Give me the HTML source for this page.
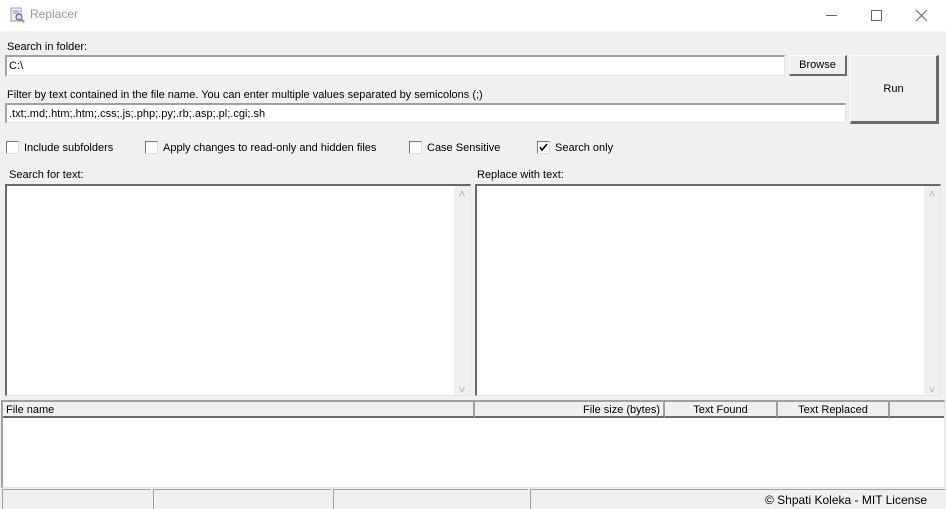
<!DOCTYPE html>
<html><head><meta charset="utf-8"><style>
*{box-sizing:border-box;margin:0;padding:0}
body{width:946px;height:509px;position:relative;overflow:hidden;background:#f0f0f0;font-family:"Liberation Sans",sans-serif;font-size:11px;color:#000}
.a{position:absolute}
.t{position:absolute;white-space:nowrap;line-height:12px}
.inp{position:absolute;background:#fff;border-top:2px solid #a0a0a0;border-left:2px solid #a0a0a0;border-right:1px solid #e3e3e3;border-bottom:1px solid #e3e3e3;padding:2px 2px 0;line-height:14px}
.btn{position:absolute;background:#f0f0f0;border-top:1px solid #fff;border-left:1px solid #fff;border-right:2px solid #696969;border-bottom:2px solid #696969;text-align:center}
.cb{position:absolute;width:13px;height:13px;background:#fff;border-top:1px solid #777;border-left:1px solid #777;border-right:1px solid #ddd;border-bottom:1px solid #ddd}
.ta{position:absolute;background:#fff;border-top:2px solid #696969;border-left:2px solid #696969;border-right:1px solid #e3e3e3;border-bottom:1px solid #e3e3e3}
.sb{position:absolute;right:0;top:0;bottom:0;width:16px;background:#f0f0f0;color:#b8b8b8;font-size:12px;text-align:center}
.hd{position:absolute;top:0;height:16px;border-right:2px solid #a0a0a0;border-bottom:2px solid #696969;background:#f0f0f0;line-height:16px;padding:0 3px}
.sp{position:absolute;top:489px;height:20px;border-top:1px solid #a0a0a0;border-left:1px solid #a0a0a0;background:#f0f0f0}
</style></head><body>
<div class="a" style="left:0;top:0;width:946px;height:31px;background:#fff"></div>
<svg class="a" style="left:10px;top:7px" width="16" height="16" viewBox="0 0 16 16"><rect x="1" y="1" width="10" height="13" fill="#eef" stroke="#99a"/><line x1="3" y1="4" x2="9" y2="4" stroke="#89a"/><line x1="3" y1="6" x2="9" y2="6" stroke="#89a"/><circle cx="9" cy="10" r="3" fill="#cde" stroke="#358"/><line x1="11" y1="12" x2="14" y2="15" stroke="#c84" stroke-width="2"/></svg>
<div class="t" style="left:30px;top:8px;font-size:12px;color:#999">Replacer</div>
<div class="a" style="left:826px;top:15px;width:11px;height:1px;background:#666"></div>
<div class="a" style="left:871px;top:10px;width:11px;height:11px;border:1px solid #666"></div>
<svg class="a" style="left:916px;top:10px" width="11" height="11"><path d="M0 0L11 11M11 0L0 11" stroke="#666" stroke-width="1"/></svg>

<div class="t" style="left:7px;top:41px">Search in folder:</div>
<div class="inp" style="left:5px;top:55px;width:780px;height:21px">C:\</div>
<div class="btn" style="left:789px;top:55px;width:58px;height:21px;line-height:19px">Browse</div>
<div class="btn" style="left:850px;top:55px;width:89px;height:69px;line-height:66px;border-right:3px solid #696969;border-bottom:3px solid #696969">Run</div>
<div class="t" style="left:7px;top:89px">Filter by text contained in the file name. You can enter multiple values separated by semicolons (;)</div>
<div class="inp" style="left:5px;top:103px;width:841px;height:20px">.txt;.md;.htm;.htm;.css;.js;.php;.py;.rb;.asp;.pl;.cgi;.sh</div>

<div class="cb" style="left:6px;top:141px"></div><div class="t" style="left:24px;top:142px">Include subfolders</div>
<div class="cb" style="left:145px;top:141px"></div><div class="t" style="left:163px;top:142px">Apply changes to read-only and hidden files</div>
<div class="cb" style="left:409px;top:141px"></div><div class="t" style="left:427px;top:142px">Case Sensitive</div>
<div class="cb" style="left:537px;top:141px"><svg width="11" height="11" style="position:absolute;left:0;top:0"><path d="M2 5L4 8L9 2" stroke="#000" stroke-width="1.6" fill="none"/></svg></div><div class="t" style="left:555px;top:142px">Search only</div>

<div class="t" style="left:9px;top:169px">Search for text:</div>
<div class="t" style="left:477px;top:169px">Replace with text:</div>
<div class="ta" style="left:5px;top:184px;width:466px;height:212px"><div class="sb"><div style="position:absolute;top:1px;width:16px">&#708;</div><div style="position:absolute;bottom:-2px;width:16px">&#709;</div></div></div>
<div class="ta" style="left:475px;top:184px;width:466px;height:212px"><div class="sb"><div style="position:absolute;top:1px;width:16px">&#708;</div><div style="position:absolute;bottom:-2px;width:16px">&#709;</div></div></div>

<div class="a" style="left:1px;top:400px;width:944px;height:88px;background:#fff;border-top:2px solid #a0a0a0;border-left:2px solid #a0a0a0;border-right:1px solid #e3e3e3;border-bottom:1px solid #e3e3e3">
<div class="hd" style="left:0;width:472px">File name</div>
<div class="hd" style="left:472px;width:190px;text-align:right">File size (bytes)</div>
<div class="hd" style="left:662px;width:113px;text-align:center">Text Found</div>
<div class="hd" style="left:775px;width:112px;text-align:center">Text Replaced</div>
<div class="hd" style="left:887px;width:54px;border-right:none"></div>
</div>

<div class="sp" style="left:2px;width:149px"></div>
<div class="sp" style="left:153px;width:178px"></div>
<div class="sp" style="left:333px;width:195px"></div>
<div class="sp" style="left:530px;width:415px"><div class="t" style="right:18px;top:4px;font-size:12px">© Shpati Koleka - MIT License</div></div>
</body></html>
